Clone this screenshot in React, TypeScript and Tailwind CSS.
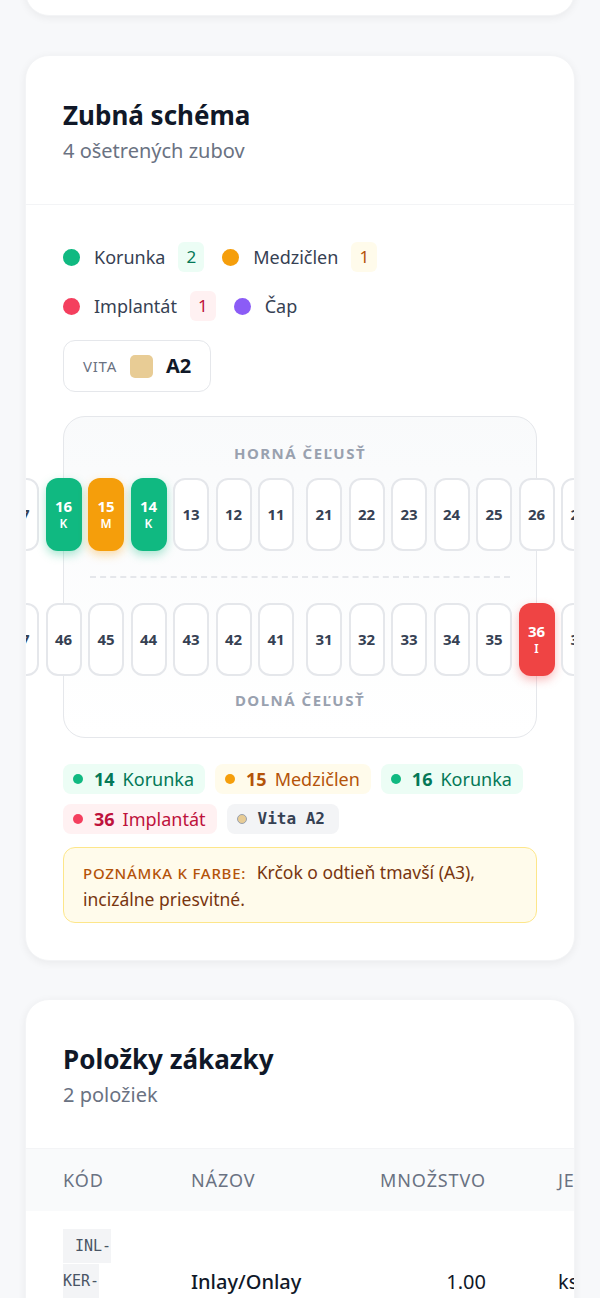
import React from "react";

type Mark = { letter: string; cls: string };

const marks: Record<number, Mark> = {
  16: { letter: "K", cls: "bg-[#10b981] shadow-[0_4px_10px_rgba(16,185,129,0.35)]" },
  15: { letter: "M", cls: "bg-[#f59e0b] shadow-[0_4px_10px_rgba(245,158,11,0.35)]" },
  14: { letter: "K", cls: "bg-[#10b981] shadow-[0_4px_10px_rgba(16,185,129,0.35)]" },
  36: { letter: "I", cls: "bg-[#ef4444] shadow-[0_4px_10px_rgba(239,68,68,0.35)]" },
};

const upperLeft = [18, 17, 16, 15, 14, 13, 12, 11];
const upperRight = [21, 22, 23, 24, 25, 26, 27, 28];
const lowerLeft = [48, 47, 46, 45, 44, 43, 42, 41];
const lowerRight = [31, 32, 33, 34, 35, 36, 37, 38];

const Tooth = ({ n }: { n: number }) => {
  const mark = marks[n];
  if (mark) {
    return (
      <div
        className={`w-[36px] h-[73px] shrink-0 rounded-[12px] flex flex-col items-center justify-center text-white ${mark.cls}`}
      >
        <span className="text-[15px] font-bold leading-[17px]">{n}</span>
        <span className="text-[12px] font-semibold leading-[14px] mt-[2px]">{mark.letter}</span>
      </div>
    );
  }
  return (
    <div className="w-[36px] h-[73px] shrink-0 rounded-[12px] border-2 border-gray-200 bg-white flex items-center justify-center">
      <span className="text-[15px] font-bold text-gray-700">{n}</span>
    </div>
  );
};

const TeethRow = ({ left, right }: { left: number[]; right: number[] }) => (
  <div className="flex justify-center gap-[12px]">
    <div className="flex gap-[6.5px] shrink-0">
      {left.map((n) => (
        <Tooth key={n} n={n} />
      ))}
    </div>
    <div className="flex gap-[6.5px] shrink-0">
      {right.map((n) => (
        <Tooth key={n} n={n} />
      ))}
    </div>
  </div>
);

const LegendItem = ({
  dot,
  label,
  count,
  badge,
}: {
  dot: string;
  label: string;
  count?: number;
  badge?: string;
}) => (
  <div className="flex items-center h-[30px]">
    <span className={`w-[17px] h-[17px] rounded-full ${dot}`} />
    <span className="ml-[14px] text-[18px] text-gray-700">{label}</span>
    {count !== undefined && (
      <span className={`ml-[13px] h-[30px] min-w-[24px] px-[8px] rounded-md flex items-center justify-center text-[17px] ${badge}`}>
        {count}
      </span>
    )}
  </div>
);

const Chip = ({ dot, bg, text, num, label }: { dot: string; bg: string; text: string; num: string; label: string }) => (
  <span className={`inline-flex items-center h-[30px] pl-[10px] pr-[11px] rounded-lg text-[18px] ${bg} ${text}`}>
    <span className={`w-[10px] h-[10px] rounded-full ${dot}`} />
    <span className="ml-[11px] font-bold">{num}</span>
    <span className="ml-[8px]">{label}</span>
  </span>
);

export default function App() {
  return (
    <div className="min-h-screen bg-[#f7f8fa] px-[25px] pb-10 font-['Noto_Sans',sans-serif] overflow-hidden">
      {/* previous card, only its bottom is visible */}
      <div className="-mt-[40px] h-[56px] bg-white rounded-[24px] border border-gray-100 shadow-[0_2px_8px_rgba(0,0,0,0.06)]" />

      {/* Tooth chart */}
      <div className="mt-[39px] bg-white rounded-[24px] border border-gray-100 shadow-[0_2px_8px_rgba(0,0,0,0.06)] overflow-hidden">
        <div className="px-[37px] pt-[42px] pb-[38px] border-b border-gray-100">
          <h2 className="text-[26px] font-bold text-gray-900 leading-[34px]">Zubná schéma</h2>
          <p className="mt-[4px] text-[20px] text-gray-500 leading-[30px]">4 ošetrených zubov</p>
        </div>

        <div className="px-[37px] pt-[37px] pb-[37px]">
          <div className="flex flex-wrap gap-x-[18px] gap-y-[19px]">
            <LegendItem dot="bg-[#10b981]" label="Korunka" count={2} badge="bg-[#ecfdf5] text-[#047857]" />
            <LegendItem dot="bg-[#f59e0b]" label="Medzičlen" count={1} badge="bg-[#fffbeb] text-[#b45309]" />
            <LegendItem dot="bg-[#f43f5e]" label="Implantát" count={1} badge="bg-[#fff1f2] text-[#be123c]" />
            <LegendItem dot="bg-[#8b5cf6]" label="Čap" />
          </div>

          <div className="mt-[19px] inline-flex items-center h-[52px] px-[19px] rounded-xl border border-gray-200 bg-white">
            <span className="text-[15px] tracking-wider text-gray-500">VITA</span>
            <span className="ml-[13px] w-[23px] h-[23px] rounded-[5px] bg-[#e8cc95]" />
            <span className="ml-[13px] text-[20px] font-bold text-gray-900">A2</span>
          </div>

          <div className="mt-[24px] rounded-[22px] border border-gray-200 bg-gradient-to-b from-gray-50 to-white pt-[27px] pb-[28px]">
            <div className="text-center text-[15px] font-bold tracking-[0.1em] text-gray-400 leading-[18px]">
              HORNÁ ČEĽUSŤ
            </div>
            <div className="mt-[16px]">
              <TeethRow left={upperLeft} right={upperRight} />
            </div>
            <div className="mx-[26px] my-[25px] border-t-2 border-dashed border-gray-200" />
            <TeethRow left={lowerLeft} right={lowerRight} />
            <div className="mt-[15px] text-center text-[15px] font-bold tracking-[0.1em] text-gray-400 leading-[18px]">
              DOLNÁ ČEĽUSŤ
            </div>
          </div>

          <div className="mt-[26px] flex flex-wrap gap-x-[10px] gap-y-[10px]">
            <Chip dot="bg-[#10b981]" bg="bg-[#ecfdf5]" text="text-[#047857]" num="14" label="Korunka" />
            <Chip dot="bg-[#f59e0b]" bg="bg-[#fffbeb]" text="text-[#b45309]" num="15" label="Medzičlen" />
            <Chip dot="bg-[#10b981]" bg="bg-[#ecfdf5]" text="text-[#047857]" num="16" label="Korunka" />
            <Chip dot="bg-[#f43f5e]" bg="bg-[#fff1f2]" text="text-[#be123c]" num="36" label="Implantát" />
            <span className="inline-flex items-center h-[30px] pl-[10px] pr-[14px] rounded-lg bg-gray-100">
              <span className="w-[10px] h-[10px] rounded-full bg-[#e8cc95] border border-gray-400" />
              <span className="ml-[11px] font-['DejaVu_Sans_Mono',monospace] text-[16px] font-bold text-gray-700">
                Vita A2
              </span>
            </span>
          </div>

          <div className="mt-[13px] rounded-xl border border-[#fde68a] bg-[#fffbeb] px-[19px] pt-[11px] pb-[10px] text-[17.5px] leading-[26px] text-[#78350f]">
            <span className="mr-[6px] text-[15px] font-medium tracking-wider text-[#b45309]">POZNÁMKA K FARBE:</span>{" "}
            Krčok o odtieň tmavší (A3), incizálne priesvitné.
          </div>
        </div>
      </div>

      {/* Order items */}
      <div className="mt-[38px] bg-white rounded-[24px] border border-gray-100 shadow-[0_2px_8px_rgba(0,0,0,0.06)] overflow-hidden">
        <div className="px-[37px] pt-[42px] pb-[38px] border-b border-gray-100">
          <h2 className="text-[26px] font-bold text-gray-900 leading-[34px]">Položky zákazky</h2>
          <p className="mt-[4px] text-[20px] text-gray-500 leading-[30px]">2 položiek</p>
        </div>

        <div className="flex items-center h-[62px] bg-gray-50 text-[18px] tracking-wider text-gray-500 whitespace-nowrap">
          <div className="w-[165px] shrink-0 pl-[37px]">KÓD</div>
          <div className="w-[186px] shrink-0">NÁZOV</div>
          <div className="w-[109px] shrink-0 text-right">MNOŽSTVO</div>
          <div className="ml-[72px] shrink-0">JEDNOTKA</div>
        </div>

        <div className="flex items-center pt-[18px] pb-[18px] whitespace-nowrap">
          <div className="w-[165px] shrink-0 pl-[37px]">
            <div className="w-[50px] whitespace-normal leading-[35px] font-['DejaVu_Sans_Mono',monospace] text-[15px] text-gray-600">
              <span className="bg-gray-100 pl-[12px] py-[8px]">INL-KER-01</span>
            </div>
          </div>
          <div className="w-[186px] shrink-0 text-[20px] font-medium text-gray-900">Inlay/Onlay</div>
          <div className="w-[109px] shrink-0 text-right text-[20px] text-gray-900">1.00</div>
          <div className="ml-[72px] shrink-0 text-[20px] text-gray-900">ks</div>
        </div>
      </div>
    </div>
  );
}
